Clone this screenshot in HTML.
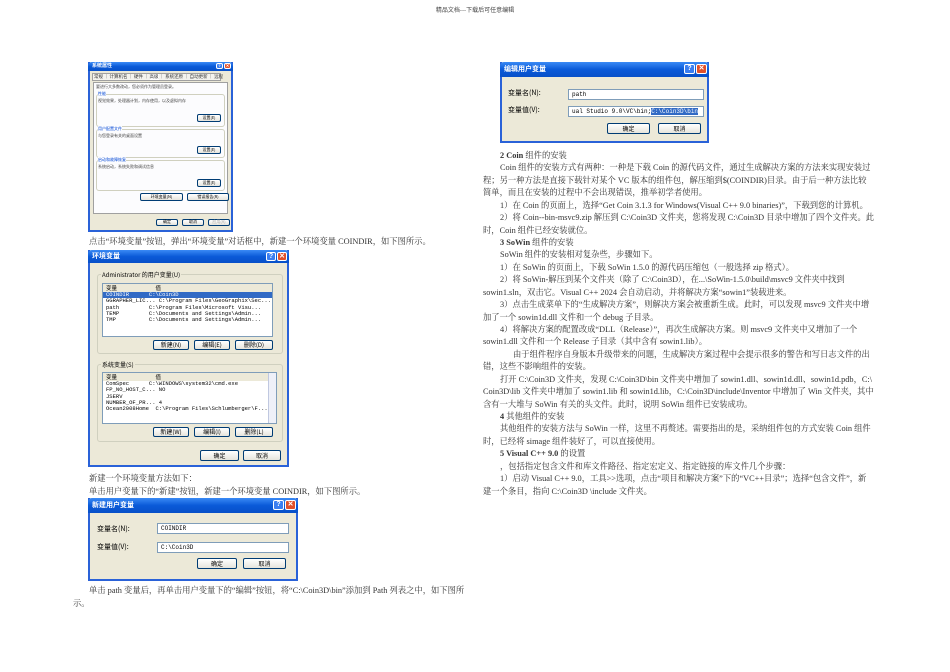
<!DOCTYPE html>
<html><head><meta charset="utf-8"><style>
*{margin:0;padding:0;box-sizing:border-box}
body{width:950px;height:672px;background:#fff;position:relative;overflow:hidden;font-family:"Liberation Serif","Noto Serif CJK SC",serif;color:#333}
.a{position:absolute;white-space:nowrap}
.t{position:absolute;white-space:nowrap;font-size:8.3px;line-height:10px}
.b{font-weight:bold}
.dlg{position:absolute;background:#ece9d8;border:2px solid #2a62d8;border-top:none}
.tb{position:absolute;left:-2px;right:-2px;top:0;background:linear-gradient(#3a8af5,#0a5ad8 50%,#0850c8);color:#fff;font:bold 8px "Liberation Sans","Noto Sans CJK SC",sans-serif;padding-left:4px;border-radius:4px 4px 0 0}
.q,.x{position:absolute;top:2px;border:1px solid #fff;border-radius:2px;color:#fff;text-align:center;font:bold 7px "Liberation Sans",sans-serif}
.q{background:#3a7ef0}.x{background:#e0502a}
.btn{position:absolute;background:linear-gradient(#fff,#e6e4dc);border:1px solid #003c74;border-radius:2px;font:6px "Noto Sans CJK SC",sans-serif;text-align:center;color:#000}
.in{position:absolute;background:#fff;border:1px solid #7f9db9;font:6px "Liberation Mono",monospace;padding-left:3px;color:#000}
.lbl{position:absolute;font:7px "Noto Sans CJK SC",sans-serif;color:#000;white-space:nowrap}
.grp{position:absolute;border:1px solid #d0d0bf;border-radius:3px}
.lst{position:absolute;background:#fff;border:1px solid #7f9db9;font:5.5px "Liberation Mono",monospace;color:#000;line-height:6.3px}
</style></head><body>
<div class="a" style="left:0;width:950px;top:5px;text-align:center;font-size:6px;color:#444;font-family:'Noto Sans CJK SC',sans-serif">精品文档---下载后可任意编辑</div>

<!-- dialog 1 -->
<div class="dlg" style="left:88px;top:62px;width:145px;height:170px">
<div class="tb" style="height:9px;font-size:5px;line-height:9px">系统属性<span class="q" style="right:10px;width:7px;height:6px;top:1px;font-size:4px;line-height:4px">?</span><span class="x" style="right:2px;width:7px;height:6px;top:1px;font-size:4px;line-height:4px">✕</span></div>
<div class="lbl" style="left:2px;top:11px;font-size:4.5px;color:#333;border:1px solid #a0a0a0;background:#f4f3ee;padding:0 1px;width:129px">常规 │ 计算机名 │ 硬件 │ <span style="background:#fff">高级</span> │ 系统还原 │ 自动更新 │ 远程</div>
<div style="position:absolute;left:3px;top:20px;width:135px;height:132px;background:#fcfcfe;border:1px solid #a0a0a0"></div>
<div class="lbl" style="left:6px;top:22px;font-size:4px;color:#444">要进行大多数改动，您必须作为管理员登录。</div>
<div class="grp" style="left:6px;top:32px;width:129px;height:33px"></div>
<div class="lbl" style="left:8px;top:29px;font-size:4px;color:#0046d5;background:#fcfcfe">性能</div>
<div class="lbl" style="left:8px;top:36px;font-size:4px;color:#444">视觉效果，处理器计划，内存使用，以及虚拟内存</div>
<div class="grp" style="left:6px;top:67px;width:129px;height:29px"></div>
<div class="lbl" style="left:8px;top:64px;font-size:4px;color:#0046d5;background:#fcfcfe">用户配置文件</div>
<div class="lbl" style="left:8px;top:71px;font-size:4px;color:#444">与您登录有关的桌面设置</div>
<div class="grp" style="left:6px;top:98px;width:129px;height:31px"></div>
<div class="lbl" style="left:8px;top:95px;font-size:4px;color:#0046d5;background:#fcfcfe">启动和故障恢复</div>
<div class="lbl" style="left:8px;top:102px;font-size:4px;color:#444">系统启动，系统失败和调试信息</div>
<div class="btn" style="left:107px;top:52px;width:24px;height:8px;font-size:4px;line-height:6px">设置(E)</div>
<div class="btn" style="left:107px;top:84px;width:24px;height:8px;font-size:4px;line-height:6px">设置(E)</div>
<div class="btn" style="left:107px;top:117px;width:24px;height:8px;font-size:4px;line-height:6px">设置(E)</div>
<div class="btn" style="left:50px;top:131px;width:43px;height:8px;font-size:4px;line-height:6px">环境变量(N)</div>
<div class="btn" style="left:97px;top:131px;width:42px;height:8px;font-size:4px;line-height:6px">错误报告(R)</div>
<div class="btn" style="left:66px;top:157px;width:22px;height:7px;font-size:4px;line-height:5px">确定</div>
<div class="btn" style="left:92px;top:157px;width:22px;height:7px;font-size:4px;line-height:5px">取消</div>
<div class="btn" style="left:118px;top:157px;width:22px;height:7px;font-size:4px;line-height:5px;color:#aaa">应用(A)</div>
</div>
<div class="t" style="left:89px;top:237px">点击“环境变量”按钮，弹出“环境变量”对话框中，新建一个环境变量 COINDIR，如下图所示。</div>

<!-- dialog 2 -->
<div class="dlg" style="left:88px;top:250px;width:201px;height:217px">
<div class="tb" style="height:13px;line-height:13px;font-size:7px">环境变量<span class="q" style="right:13px;width:10px;height:9px;line-height:7px">?</span><span class="x" style="right:2px;width:10px;height:9px;line-height:7px">✕</span></div>
<div class="grp" style="left:7px;top:24px;width:186px;height:80px"></div>
<div class="lbl" style="left:11px;top:20px;font-size:6px;background:#ece9d8;padding:0 1px">Administrator 的用户变量(U)</div>
<div class="lst" style="left:12px;top:33px;width:171px;height:54px">
<div style="background:#ece9d8;height:8px;padding-left:3px;font-family:'Noto Sans CJK SC';line-height:8px">变量　　　　　　　值</div>
<div style="background:#316ac5;color:#fff;padding-left:3px">COINDIR&nbsp;&nbsp;&nbsp;&nbsp;&nbsp;&nbsp;C:\Coin3D</div>
<div style="padding-left:3px">GGRAPHER_LIC... C:\Program Files\GeoGraphix\Sec...<br>path&nbsp;&nbsp;&nbsp;&nbsp;&nbsp;&nbsp;&nbsp;&nbsp;&nbsp;C:\Program Files\Microsoft Visu...<br>TEMP&nbsp;&nbsp;&nbsp;&nbsp;&nbsp;&nbsp;&nbsp;&nbsp;&nbsp;C:\Documents and Settings\Admin...<br>TMP&nbsp;&nbsp;&nbsp;&nbsp;&nbsp;&nbsp;&nbsp;&nbsp;&nbsp;&nbsp;C:\Documents and Settings\Admin...</div></div>
<div class="btn" style="left:63px;top:90px;width:36px;height:10px;line-height:8px">新建(N)</div>
<div class="btn" style="left:104px;top:90px;width:36px;height:10px;line-height:8px">编辑(E)</div>
<div class="btn" style="left:145px;top:90px;width:38px;height:10px;line-height:8px">删除(D)</div>
<div class="grp" style="left:7px;top:114px;width:186px;height:78px"></div>
<div class="lbl" style="left:11px;top:110px;font-size:6px;background:#ece9d8;padding:0 1px">系统变量(S)</div>
<div class="lst" style="left:12px;top:122px;width:175px;height:52px;overflow:hidden">
<div style="background:#ece9d8;height:8px;padding-left:3px;font-family:'Noto Sans CJK SC';line-height:8px">变量　　　　　　　值</div>
<div style="padding-left:3px">ComSpec&nbsp;&nbsp;&nbsp;&nbsp;&nbsp;&nbsp;C:\WINDOWS\system32\cmd.exe<br>FP_NO_HOST_C... NO<br>JSERV<br>NUMBER_OF_PR... 4<br>Ocean2008Home&nbsp;&nbsp;C:\Program Files\Schlumberger\F...</div>
<div style="position:absolute;right:0;top:0;width:8px;height:52px;background:#eef0f8;border-left:1px solid #c0c8e0"></div></div>
<div class="btn" style="left:63px;top:177px;width:36px;height:10px;line-height:8px">新建(W)</div>
<div class="btn" style="left:104px;top:177px;width:36px;height:10px;line-height:8px">编辑(I)</div>
<div class="btn" style="left:145px;top:177px;width:38px;height:10px;line-height:8px">删除(L)</div>
<div class="btn" style="left:110px;top:200px;width:39px;height:11px;line-height:9px">确定</div>
<div class="btn" style="left:153px;top:200px;width:38px;height:11px;line-height:9px">取消</div>
</div>
<div class="t" style="left:89px;top:474px">新建一个环境变量方法如下：</div>
<div class="t" style="left:89px;top:487px">单击用户变量下的“新建”按钮，新建一个环境变量 COINDIR，如下图所示。</div>

<!-- dialog 3 -->
<div class="dlg" style="left:88px;top:498px;width:210px;height:83px">
<div class="tb" style="height:15px;line-height:15px;font-size:7px">新建用户变量<span class="q" style="right:14px;width:11px;height:10px;line-height:8px">?</span><span class="x" style="right:2px;width:11px;height:10px;line-height:8px">✕</span></div>
<div class="lbl" style="left:7px;top:26px">变量名(N):</div>
<div class="lbl" style="left:7px;top:44px">变量值(V):</div>
<div class="in" style="left:67px;top:25px;width:132px;height:11px;line-height:9px">COINDIR</div>
<div class="in" style="left:67px;top:44px;width:132px;height:11px;line-height:9px">C:\Coin3D</div>
<div class="btn" style="left:107px;top:60px;width:40px;height:11px;line-height:9px">确定</div>
<div class="btn" style="left:153px;top:60px;width:43px;height:11px;line-height:9px">取消</div>
</div>
<div class="t" style="left:89px;top:586px">单击 path 变量后，再单击用户变量下的“编辑”按钮，将“C:\Coin3D\bin”添加到 Path 列表之中，如下图所</div>
<div class="t" style="left:73px;top:599px">示。</div>

<!-- right dialog -->
<div class="dlg" style="left:500px;top:62px;width:209px;height:81px">
<div class="tb" style="height:15px;line-height:15px;font-size:7px">编辑用户变量<span class="q" style="right:14px;width:11px;height:10px;line-height:8px">?</span><span class="x" style="right:2px;width:11px;height:10px;line-height:8px">✕</span></div>
<div class="lbl" style="left:6px;top:26px">变量名(N):</div>
<div class="lbl" style="left:6px;top:43px">变量值(V):</div>
<div class="in" style="left:66px;top:27px;width:136px;height:11px;line-height:9px">path</div>
<div class="in" style="left:66px;top:44px;width:136px;height:11px;line-height:9px">ual Studio 9.0\VC\bin;<span style="background:#316ac5;color:#fff">C:\Coin3D\bin</span></div>
<div class="btn" style="left:105px;top:61px;width:43px;height:11px;line-height:9px">确定</div>
<div class="btn" style="left:156px;top:61px;width:43px;height:11px;line-height:9px">取消</div>
</div>

<div class="t b" style="left:500px;top:151px">2 Coin <span style="font-weight:normal">组件的安装</span></div>
<div class="t" style="left:500px;top:163px">Coin 组件的安装方式有两种：一种是下载 Coin 的源代码文件，通过生成解决方案的方法来实现安装过</div>
<div class="t" style="left:483px;top:176px">程；另一种方法是直接下载针对某个 VC 版本的组件包，解压缩到$(COINDIR)目录。由于后一种方法比较</div>
<div class="t" style="left:483px;top:188px">简单，而且在安装的过程中不会出现错误，推举初学者使用。</div>
<div class="t" style="left:500px;top:201px">1）在 Coin 的页面上，选择“Get Coin 3.1.3 for Windows(Visual C++ 9.0 binaries)”，下载到您的计算机。</div>
<div class="t" style="left:500px;top:213px">2）将 Coin--bin-msvc9.zip 解压到 C:\Coin3D 文件夹，您将发现 C:\Coin3D 目录中增加了四个文件夹。此</div>
<div class="t" style="left:483px;top:226px">时，Coin 组件已经安装就位。</div>
<div class="t b" style="left:500px;top:238px">3 SoWin <span style="font-weight:normal">组件的安装</span></div>
<div class="t" style="left:500px;top:250px">SoWin 组件的安装相对复杂些，步骤如下。</div>
<div class="t" style="left:500px;top:263px">1）在 SoWin 的页面上，下载 SoWin 1.5.0 的源代码压缩包（一般选择 zip 格式）。</div>
<div class="t" style="left:500px;top:275px">2）将 SoWin-解压到某个文件夹（除了 C:\Coin3D），在...\SoWin-1.5.0\build\msvc9 文件夹中找到</div>
<div class="t" style="left:483px;top:288px">sowin1.sln，双击它。Visual C++ 2024 会自动启动，并将解决方案“sowin1”装载进来。</div>
<div class="t" style="left:500px;top:300px">3）点击生成菜单下的“生成解决方案”，则解决方案会被重新生成。此时，可以发现 msvc9 文件夹中增</div>
<div class="t" style="left:483px;top:313px">加了一个 sowin1d.dll 文件和一个 debug 子目录。</div>
<div class="t" style="left:500px;top:325px">4）将解决方案的配置改成“DLL（Release）”，再次生成解决方案。则 msvc9 文件夹中又增加了一个</div>
<div class="t" style="left:483px;top:337px">sowin1.dll 文件和一个 Release 子目录（其中含有 sowin1.lib）。</div>
<div class="t" style="left:513px;top:350px">由于组件程序自身版本升级带来的问题，生成解决方案过程中会提示很多的警告和写日志文件的出</div>
<div class="t" style="left:483px;top:362px">错，这些不影响组件的安装。</div>
<div class="t" style="left:500px;top:375px">打开 C:\Coin3D 文件夹，发现 C:\Coin3D\bin 文件夹中增加了 sowin1.dll、sowin1d.dll、sowin1d.pdb，C:\</div>
<div class="t" style="left:483px;top:387px">Coin3D\lib 文件夹中增加了 sowin1.lib 和 sowin1d.lib，C:\Coin3D\include\Inventor 中增加了 Win 文件夹，其中</div>
<div class="t" style="left:483px;top:400px">含有一大堆与 SoWin 有关的头文件。此时，说明 SoWin 组件已安装成功。</div>
<div class="t b" style="left:500px;top:412px">4 <span style="font-weight:normal">其他组件的安装</span></div>
<div class="t" style="left:500px;top:424px">其他组件的安装方法与 SoWin 一样，这里不再赘述。需要指出的是，采纳组件包的方式安装 Coin 组件</div>
<div class="t" style="left:483px;top:437px">时，已经将 simage 组件装好了，可以直接使用。</div>
<div class="t b" style="left:500px;top:449px">5 Visual C++ 9.0 <span style="font-weight:normal">的设置</span></div>
<div class="t" style="left:500px;top:462px">，包括指定包含文件和库文件路径、指定宏定义、指定链接的库文件几个步骤：</div>
<div class="t" style="left:500px;top:474px">1）启动 Visual C++ 9.0，工具&gt;&gt;选项，点击“项目和解决方案”下的“VC++目录”；选择“包含文件”，新</div>
<div class="t" style="left:483px;top:487px">建一个条目，指向 C:\Coin3D \include 文件夹。</div>
</body></html>
